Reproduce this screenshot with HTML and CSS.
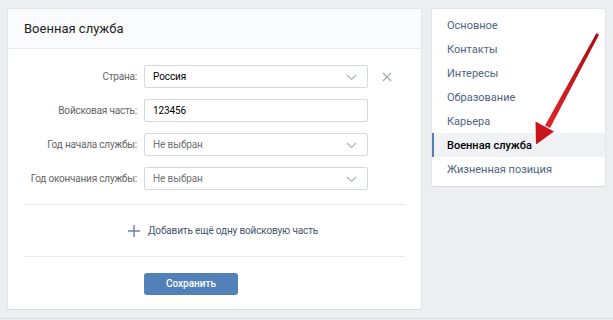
FILE: index.html
```html
<!DOCTYPE html>
<html lang="ru">
<head>
<meta charset="utf-8">
<link rel="stylesheet" href="styles.css">
</head>
<body>
<div class="page">
  <div class="main card">
    <div class="card-header">Военная служба</div>
    <div class="form">
      <div class="row">
        <div class="label">Страна:</div>
        <div class="field select"><span class="value">Россия</span><svg class="chev" width="11" height="7" viewBox="0 0 11 7"><path d="M1 1l4.5 4.5L10 1" fill="none" stroke="#a9b5c1" stroke-width="1.2"/></svg></div>
        <svg class="remove" width="10" height="10" viewBox="0 0 10 10"><path d="M1 1l8 8M9 1l-8 8" stroke="#9eb0c3" stroke-width="1.4"/></svg>
      </div>
      <div class="row">
        <div class="label">Войсковая часть:</div>
        <div class="field"><span class="value">123456</span></div>
      </div>
      <div class="row">
        <div class="label">Год начала службы:</div>
        <div class="field select"><span class="value placeholder">Не выбран</span><svg class="chev" width="11" height="7" viewBox="0 0 11 7"><path d="M1 1l4.5 4.5L10 1" fill="none" stroke="#a9b5c1" stroke-width="1.2"/></svg></div>
      </div>
      <div class="row">
        <div class="label">Год окончания службы:</div>
        <div class="field select"><span class="value placeholder">Не выбран</span><svg class="chev" width="11" height="7" viewBox="0 0 11 7"><path d="M1 1l4.5 4.5L10 1" fill="none" stroke="#a9b5c1" stroke-width="1.2"/></svg></div>
      </div>
    </div>
    <div class="add">
      <svg class="plus" width="12" height="12" viewBox="0 0 12 12"><path d="M6 0v12M0 6h12" stroke="#6a84a3" stroke-width="1.4"/></svg>
      <span>Добавить ещё одну войсковую часть</span>
    </div>
    <div class="actions">
      <button class="btn">Сохранить</button>
    </div>
  </div>
  <div class="side card">
    <div class="item">Основное</div>
    <div class="item">Контакты</div>
    <div class="item">Интересы</div>
    <div class="item">Образование</div>
    <div class="item">Карьера</div>
    <div class="item active">Военная служба</div>
    <div class="item">Жизненная позиция</div>
  </div>
  <svg class="arrow" width="613" height="320" viewBox="0 0 613 320">
    <defs>
      <linearGradient id="ar" x1="0" y1="0" x2="1" y2="0">
        <stop offset="0" stop-color="#e2282a"/>
        <stop offset="1" stop-color="#a50e12"/>
      </linearGradient>
    </defs>
    <path d="M596.5 33 L599 34.8 L550 128 L545 125.5 Z" fill="url(#ar)"/>
    <path d="M536 144.5 L535.5 121.5 L554 131.5 Z" fill="#c8161a"/>
  </svg>
</div>
</body>
</html>
```
FILE: styles.css
```css
* { box-sizing: border-box; }
html, body { margin: 0; padding: 0; }
body {
  background: #edeef0;
  font-family: Roboto, "Noto Sans", Arial, sans-serif;
  width: 613px;
  height: 320px;
  overflow: hidden;
}
.page {
  position: relative;
  display: flex;
  align-items: flex-start;
  gap: 11px;
  padding: 9px 8px 0 8px;
  height: 319px;
  border-bottom: 1px solid #dcdde0;
}
.card {
  background: #fff;
  border-radius: 2px;
  box-shadow: 0 1px 0 0 #d7d8db, 0 0 0 1px #e3e4e8;
}
.main {
  width: 413px;
  height: 300px;
}
.card-header {
  height: 40px;
  background: #fafbfc;
  border-bottom: 1px solid #e7e8ec;
  border-radius: 2px 2px 0 0;
  padding: 0 16px;
  display: flex;
  align-items: center;
  font-size: 13px;
  color: #222;
}
.form {
  padding: 16px 0 14px;
  display: flex;
  flex-direction: column;
  gap: 11px;
  border-bottom: 1px solid #e7e8ec;
  margin: 0 16px;
}
.row {
  display: flex;
  align-items: center;
  gap: 7px;
}
.label {
  width: 113px;
  text-align: right;
  white-space: nowrap;
  font-size: 10px;
  letter-spacing: -0.2px;
  color: #656565;
}
.field {
  width: 224px;
  height: 23px;
  border: 1px solid #d3d9de;
  border-radius: 2px;
  display: flex;
  align-items: center;
  justify-content: space-between;
  padding: 0 10px 0 8px;
  font-size: 10px;
  letter-spacing: -0.1px;
  color: #000;
}
.placeholder { color: #6f7377; }
.chev { margin-top: 1px; }
.remove { margin-left: 7px; }
.add {
  margin: 0 16px;
  height: 52px;
  border-bottom: 1px solid #e7e8ec;
  display: flex;
  align-items: center;
  padding-left: 104px;
  gap: 8px;
  font-size: 10px;
  letter-spacing: -0.15px;
  color: #45566b;
}
.actions {
  padding: 15px 0 0 136px;
}
.btn {
  width: 94px;
  height: 22px;
  background: #5181b8;
  border: 0;
  border-radius: 3px;
  color: #fff;
  font-family: inherit;
  font-size: 10px;
  font-weight: 500;
  padding: 0;
}
.side {
  width: 173px;
  padding: 4px 0 5px;
}
.item {
  height: 24px;
  display: flex;
  align-items: center;
  padding-left: 13px;
  font-size: 11px;
  color: #4e6580;
  border-left: 2px solid transparent;
}
.item.active {
  background: #f0f2f5;
  border-left-color: #5181b8;
  color: #000;
  font-weight: 500;
}
.arrow {
  position: absolute;
  left: 0;
  top: 0;
  pointer-events: none;
}
```
